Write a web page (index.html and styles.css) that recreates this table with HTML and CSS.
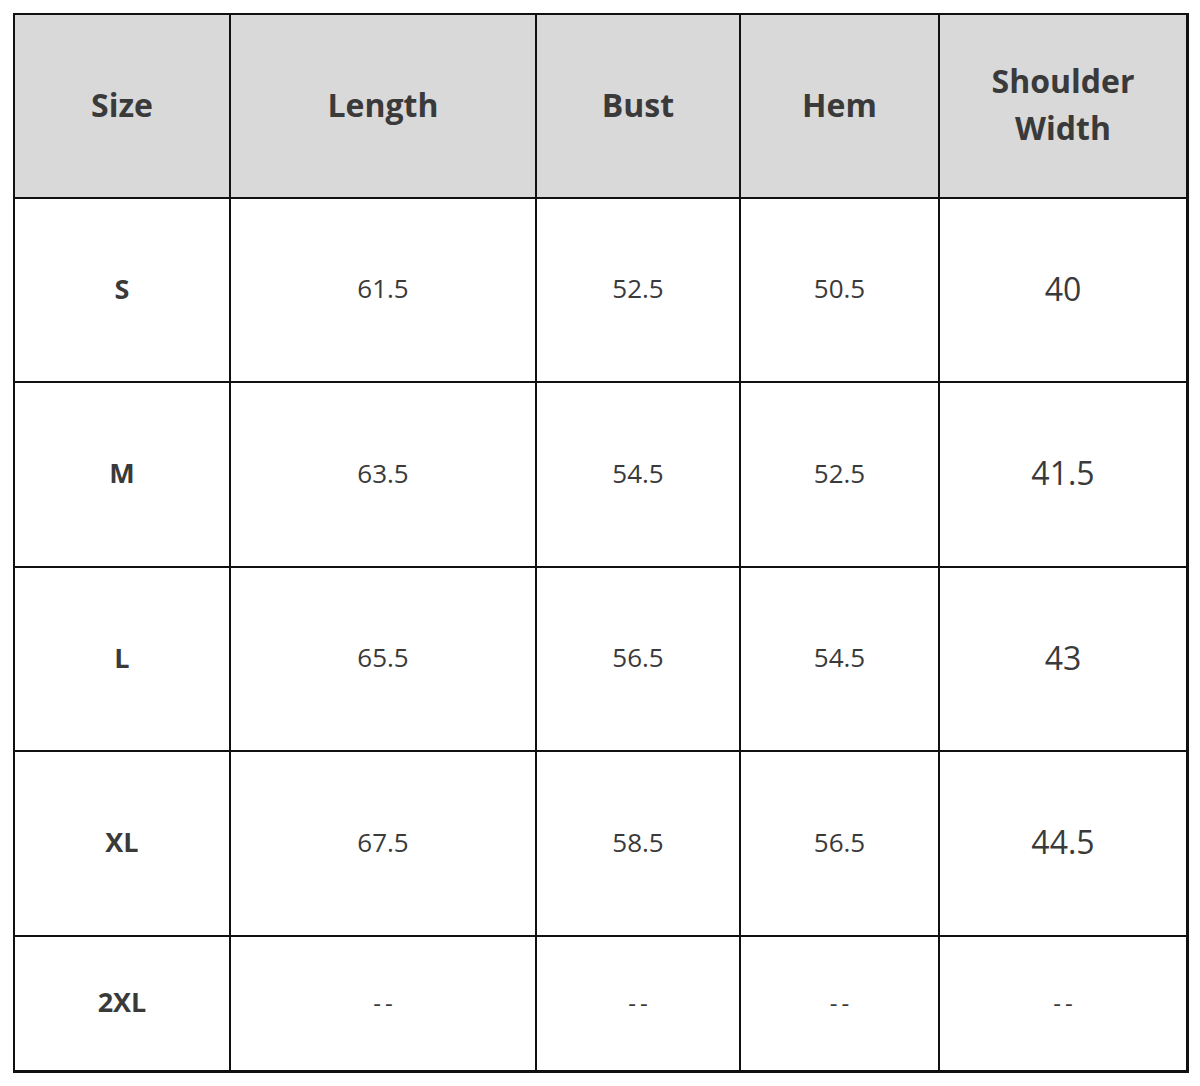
FILE: index.html
```html
<!DOCTYPE html>
<html>
<head>
<meta charset="utf-8">
<link rel="stylesheet" href="styles.css">
</head>
<body>
<table class="size-table">
  <colgroup>
    <col class="c1"><col class="c2"><col class="c3"><col class="c4"><col class="c5">
  </colgroup>
  <thead>
    <tr class="head-row">
      <th>Size</th>
      <th>Length</th>
      <th>Bust</th>
      <th>Hem</th>
      <th class="last-col">Shoulder<br>Width</th>
    </tr>
  </thead>
  <tbody>
    <tr class="data-row">
      <td class="size">S</td><td>61.5</td><td>52.5</td><td>50.5</td><td class="last-col big">40</td>
    </tr>
    <tr class="data-row tall">
      <td class="size">M</td><td>63.5</td><td>54.5</td><td>52.5</td><td class="last-col big">41.5</td>
    </tr>
    <tr class="data-row">
      <td class="size">L</td><td>65.5</td><td>56.5</td><td>54.5</td><td class="last-col big">43</td>
    </tr>
    <tr class="data-row tall">
      <td class="size">XL</td><td>67.5</td><td>58.5</td><td>56.5</td><td class="last-col big">44.5</td>
    </tr>
    <tr class="data-row last-row">
      <td class="size">2XL</td><td class="dash">--</td><td class="dash">--</td><td class="dash">--</td><td class="last-col dash">--</td>
    </tr>
  </tbody>
</table>
</body>
</html>
```

FILE: styles.css
```css
html, body {
  margin: 0;
  padding: 0;
  background: #ffffff;
}
body {
  padding: 13px 0 0 13px;
  font-family: "Open Sans", "Noto Sans", sans-serif;
  color: #3a3a3a;
}
.size-table {
  border-collapse: separate;
  border-spacing: 0;
  table-layout: fixed;
  width: 1174px;
  border-top: 2px solid #111;
  border-left: 2px solid #111;
}
.c1 { width: 216px; }
.c2 { width: 306px; }
.c3 { width: 204px; }
.c4 { width: 199px; }
.c5 { width: 249px; }
.size-table th,
.size-table td {
  border-right: 2px solid #111;
  border-bottom: 2px solid #111;
  text-align: center;
  vertical-align: middle;
  padding: 0 0 4px 0;
}
.size-table th.last-col,
.size-table td.last-col {
  border-right: 3px solid #111;
}
.head-row th {
  height: 178px;
  background: #d9d9d9;
  font-size: 32px;
  font-weight: 700;
  line-height: 47px;
}
.data-row td {
  height: 178px;
  font-size: 26px;
  font-weight: 400;
}
.data-row.tall td {
  height: 179px;
}
.data-row td.size {
  font-weight: 700;
  font-size: 27px;
}
.data-row td.big {
  font-size: 32px;
}
.data-row.last-row td {
  height: 129px;
  border-bottom: 3px solid #111;
}
.data-row td.dash {
  font-size: 24px;
  letter-spacing: 4px;
  text-indent: 4px;
  padding-bottom: 2px;
}
.data-row.last-row td.dash {
  height: 131px;
}
```
